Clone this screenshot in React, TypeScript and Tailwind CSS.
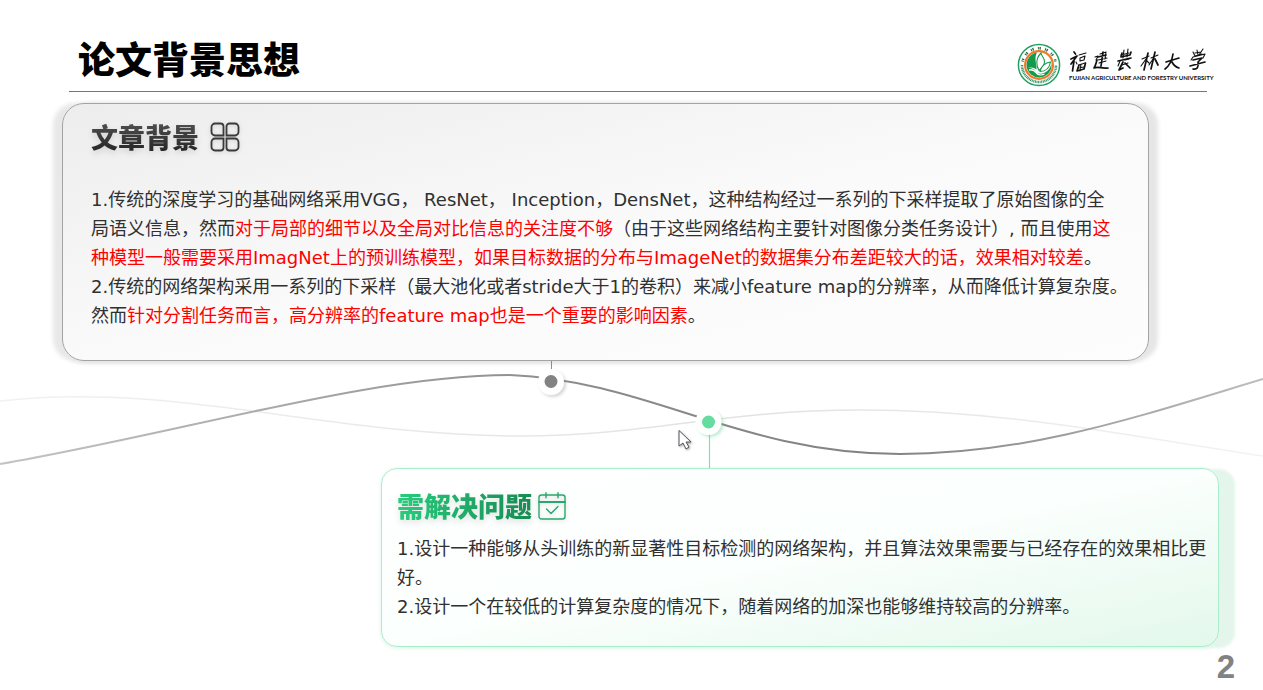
import React from "react";

const paragraphFont =
  "font-['DejaVu_Sans','Noto_Sans_CJK_SC',sans-serif] text-[18px] leading-[29px]";

function Seal() {
  return (
    <svg viewBox="0 0 44 44" className="size-11 shrink-0" role="img" aria-label="校徽">
      <circle cx="22" cy="22" r="20.6" fill="#fff" stroke="#22a060" strokeWidth="1.5" />
      <path d="M5.500 18.500A16.900 16.900 0 0 1 38.500 18.500" fill="none" stroke="#24613f" strokeWidth="2.600" strokeDasharray="1 .7 1.300 4.200" />
      <path d="M5 22A17 17 0 0 0 39 22" fill="none" stroke="#3c9467" strokeWidth="2.600" strokeDasharray="1 .6" />
      <circle cx="22" cy="22" r="13.900" fill="#fff" stroke="#ee7a2a" strokeWidth="2.200" />
      <path d="M20 9.600A12.500 12.500 0 1 0 34.500 21c-2 6-5.500 8.500-9 9.500-3 .8-5.500 0-7-2.500-1-2-4-3-7.500-3.500 4 0 6.500.3 8.500 2C19.500 20 17 15 20 9.600z" fill="#149a4c" />
      <path d="M22 27.500c-3-5-3.500-12 2-17.500 0 2.500 3.500 4.500 3.500 8.500 0 3.500-2.500 6.500-5.500 9z" fill="#fff" stroke="#149a4c" strokeWidth="1.100" />
      <path d="M23 28.500c1-5 5-9 10.500-9.500-1 6-5 9.500-10.500 9.500z" fill="#fff" stroke="#149a4c" strokeWidth="1.100" />
      <path d="M12 27c4-1 6 1 7.500 3s5 2.500 8 1" fill="none" stroke="#fff" strokeWidth="1.300" />
    </svg>
  );
}

function BrushName() {
  return (
    <svg viewBox="0 0 138 26" className="h-[26px] w-full" fill="none" stroke="#111" strokeLinecap="round" strokeLinejoin="round" role="img" aria-label="福建农林大学">
      <g strokeWidth="1.700">
        <path d="M5 4l1.500 2M2 11l6-3-6 8M5 13l-1.500 10M10 17l-2 6 7-2 1.500-6" />
        <path d="M29 9l8-2M34 4l-2 14M28 12c-1 3-1 5-3 8 5-2 7 1 14 0" />
        <path d="M53 5l-1 4 9-2 1-3M49 13l13-3M54 14l-4 8 4-2M56 15l5 5" />
        <path d="M79 5l-4 17M86 4l-4 17M86 11l3 6" />
        <path d="M97 14l13-4M104 6c-1 7-4 12-8 15M103 14c2 4 4 5 7 6" />
        <path d="M124 12l9-2-4 4M121 18l15-4M129 14c1 5-1 8-5 7" />
      </g>
      <g strokeWidth="1.100">
        <path d="M10 7l7-2M11 10l5-2-1 4-4 1zM10 17l6-2M9 20l6-1M12 16l-1 7M7 14l1 2" />
        <path d="M31 6l6-2-1 7M29 12l9-2M30 15l7-2M26 9l3-1-2 4" />
        <path d="M55 2l-1 8M59 1l-1 8M52 7l8-2M51 13l-2 5M56 12l4-1M53 17l6-2" />
        <path d="M73 11l7-3M77 11l-5 7M77 12l3 3M82 10l7-3M84 11l-4 6" />
        <path d="M124 4l2 4M128 2l1 5M134 1l-4 6M122 12l2-3 12-3-2 4M126 5l6-1M126 8l7-2" />
      </g>
    </svg>
  );
}

function GridIcon() {
  return (
    <svg viewBox="0 0 30 30" className="size-[30px] drop-shadow-sm" fill="none" stroke="#3a3a3a" strokeWidth="1.8" aria-hidden="true">
      <path d="M5 1.500h5.500a3 3 0 0 1 3 3v9H5a3.500 3.500 0 0 1-3.500-3.500V5A3.500 3.500 0 0 1 5 1.500zM19.500 1.500H25A3.500 3.500 0 0 1 28.500 5v5a3.500 3.500 0 0 1-3.500 3.500h-8.500v-9a3 3 0 0 1 3-3zM5 16.500h8.500v9a3 3 0 0 1-3 3H5A3.500 3.500 0 0 1 1.500 25v-5A3.500 3.500 0 0 1 5 16.500zM16.500 16.500H25a3.500 3.500 0 0 1 3.500 3.500v5a3.500 3.500 0 0 1-3.500 3.500h-5.500a3 3 0 0 1-3-3z" />
    </svg>
  );
}

function CalendarIcon() {
  return (
    <svg viewBox="0 0 28 28" className="size-7 drop-shadow-sm" fill="none" stroke="#29a86c" strokeWidth="1.4" strokeLinecap="round" strokeLinejoin="round" aria-hidden="true">
      <rect x="1" y="3" width="26" height="24" rx="2.500" />
      <path d="M1 10h26" strokeWidth="1.800" />
      <path d="M8 .8v5M20 .8v5M8.500 17l4.500 4.500 7-7" />
    </svg>
  );
}

function Waves() {
  return (
    <svg viewBox="0 0 1263 107" className="block h-auto w-full" fill="none" aria-hidden="true">
      <defs>
        <linearGradient id="wave" x1="0" x2="1263" y1="0" y2="0" gradientUnits="userSpaceOnUse">
          <stop offset="0" stopColor="#c4c4c4" />
          <stop offset="0.45" stopColor="#8c8c8c" />
          <stop offset="0.7" stopColor="#828282" />
          <stop offset="1" stopColor="#bdbdbd" />
        </linearGradient>
        <linearGradient id="faintWave" x1="0" x2="1263" y1="0" y2="0" gradientUnits="userSpaceOnUse">
          <stop offset="0" stopColor="#f1f1f1" />
          <stop offset="0.6" stopColor="#e2e2e2" />
          <stop offset="1" stopColor="#f3f3f3" />
        </linearGradient>
        <filter id="dotShadow" x="-50%" y="-50%" width="200%" height="200%">
          <feDropShadow dx="2" dy="2" stdDeviation="1.500" floodColor="#777" floodOpacity="0.3" />
        </filter>
        <filter id="greenShadow" x="-50%" y="-50%" width="200%" height="200%">
          <feDropShadow dx="2" dy="2" stdDeviation="1.500" floodColor="#43c98b" floodOpacity="0.35" />
        </filter>
        <filter id="cursorShadow" x="-50%" y="-50%" width="200%" height="200%">
          <feDropShadow dx="1" dy="1" stdDeviation="0.800" floodColor="#000" floodOpacity="0.35" />
        </filter>
      </defs>
      <path d="M0 40C170 20 330 75 520 75C650 75 720 49 860 49C1010 49 1140 77 1263 95" stroke="url(#faintWave)" strokeWidth="1.500" />
      <path d="M0 103C180 72 370 14 510 14C650 20 740 93 900 93C1030 93 1140 55 1263 18" stroke="url(#wave)" strokeWidth="2" />
      <path d="M551.500 0v12" stroke="#8c8c8c" />
      <path d="M709.500 70v37" stroke="#79e3ae" strokeWidth="1.200" />
      <circle cx="551" cy="21" r="13" fill="#fff" filter="url(#dotShadow)" />
      <circle cx="551" cy="20.500" r="6.500" fill="#828282" />
      <circle cx="708.500" cy="61" r="13" fill="#fff" filter="url(#greenShadow)" />
      <circle cx="708.500" cy="61" r="6.500" fill="#65dda0" />
      <path d="M679 69.500v15.500l4-3 3 6 3-2-3-5h5z" fill="#fff" stroke="#50505a" strokeLinejoin="round" filter="url(#cursorShadow)" />
    </svg>
  );
}

function Red({ children }: { children: React.ReactNode }) {
  return <span className="text-[#ff0000]">{children}</span>;
}

export default function App() {
  return (
    <main className="min-h-screen overflow-hidden bg-white font-['Noto_Sans_CJK_SC',sans-serif]">
      <header className="ml-[69px] mr-14 flex h-[92px] items-end justify-between border-b border-[#777] pb-1 pl-[9px]">
        <h1 className="text-[37px] font-black leading-[58px] text-black">论文背景思想</h1>
        <div className="flex items-center gap-2">
          <Seal />
          <div className="w-[138px]">
            <BrushName />
            <p className="whitespace-nowrap font-['Lato',sans-serif] text-[6px] font-bold leading-2 text-[#111]">
              FUJIAN AGRICULTURE AND FORESTRY UNIVERSITY
            </p>
          </div>
        </div>
      </header>

      <section className="ml-[62px] mr-[114px] mt-[11px] h-[258px] rounded-[22px] border border-[#a3a3a3] bg-linear-to-br from-[#ededed] via-[#fafafa] to-[#fdfdfd] px-7 pt-[15px] shadow-[9px_0_4px_#e6e6e6,-9px_0_4px_#e8e8e8,0_2px_4px_#ddd]">
        <div className="flex items-center gap-[11px]">
          <h2 className="bg-linear-to-b from-[#555] to-[#222] bg-clip-text text-[27px] font-black leading-9 text-transparent drop-shadow-md">文章背景</h2>
          <GridIcon />
        </div>
        <div className={`mt-[30px] whitespace-nowrap text-[#303030] ${paragraphFont}`}>
          <p>1.传统的深度学习的基础网络采用VGG， ResNet， Inception，DensNet，这种结构经过一系列的下采样提取了原始图像的全</p>
          <p>局语义信息，然而<Red>对于局部的细节以及全局对比信息的关注度不够</Red>（由于这些网络结构主要针对图像分类任务设计）, 而且使用<Red>这</Red></p>
          <p><Red>种模型一般需要采用ImagNet上的预训练模型，如果目标数据的分布与ImageNet的数据集分布差距较大的话，效果相对较差</Red>。</p>
          <p>2.传统的网络架构采用一系列的下采样（最大池化或者stride大于1的卷积）来减小feature map的分辨率，从而降低计算复杂度。</p>
          <p>然而<Red>针对分割任务而言，高分辨率的feature map也是一个重要的影响因素</Red>。</p>
        </div>
      </section>

      <Waves />

      <section className="ml-[381px] mr-11 h-[179px] rounded-[16px] border border-[#a9edcb] bg-linear-to-br from-white via-[#fbfffd] to-[#e3f8ec] px-[15px] pt-[19px] shadow-[16px_1px_3px_#e4f5ec,0_1px_4px_#d9f5e7]">
        <div className="flex items-center gap-[6px]">
          <h2 className="bg-linear-to-r from-[#27cd7d] to-[#188b54] bg-clip-text text-[27px] font-black leading-9 text-transparent drop-shadow-md">需解决问题</h2>
          <CalendarIcon />
        </div>
        <div className={`mt-[10px] whitespace-nowrap text-[#303030] ${paragraphFont}`}>
          <p>1.设计一种能够从头训练的新显著性目标检测的网络架构，并且算法效果需要与已经存在的效果相比更</p>
          <p>好。</p>
          <p>2.设计一个在较低的计算复杂度的情况下，随着网络的加深也能够维持较高的分辨率。</p>
        </div>
      </section>
      <footer className="mr-7 pt-[2px] text-right font-['Liberation_Sans',sans-serif] text-[33px] font-bold leading-9 text-[#828282]">2</footer>
    </main>
  );
}
